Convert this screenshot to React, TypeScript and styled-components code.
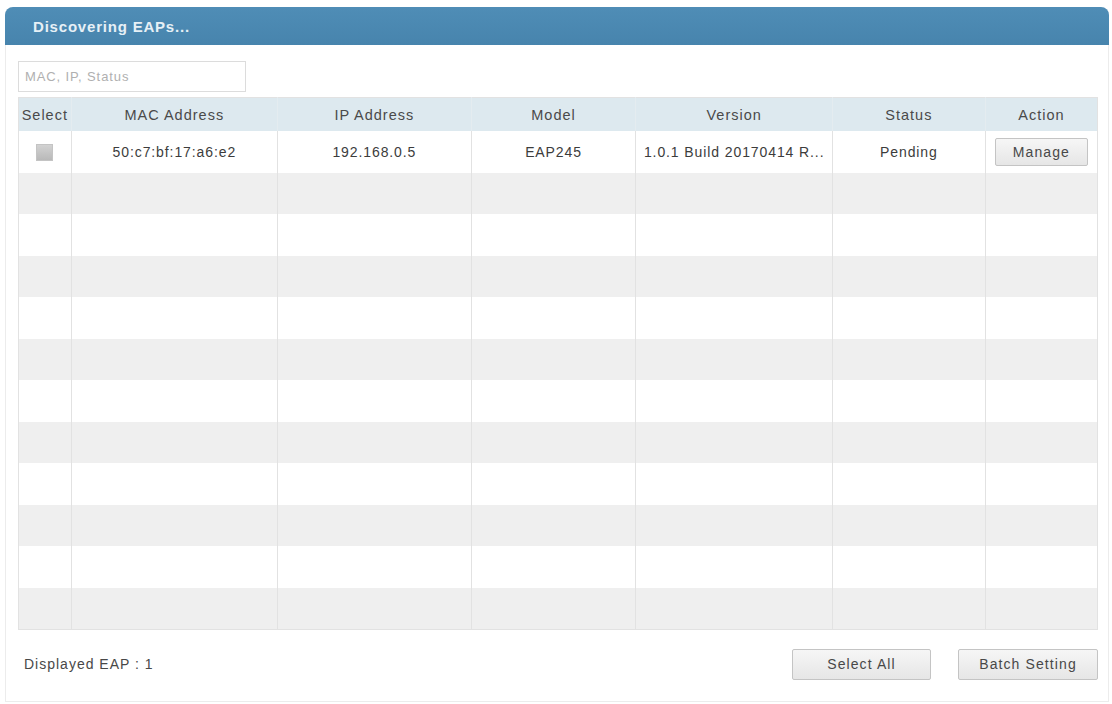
import styled, { createGlobalStyle } from "styled-components";

const GlobalStyle = createGlobalStyle`
  html, body {
    margin: 0;
    padding: 0;
    background: #ffffff;
    font-family: "Liberation Sans", Arial, sans-serif;
  }
`

const Page = styled.div`
  padding: 7px 3px 2px 5px;
  width: 1112px;
  height: 704px;
  box-sizing: border-box;
`

const Panel = styled.div`
  border: 1px solid #ececec;
  border-top: none;
  border-radius: 8px 8px 0 0;
  height: 100%;
  box-sizing: border-box;
  display: flex;
  flex-direction: column;
`

const PanelHeader = styled.div`
  height: 38px;
  margin: 0 -1px;
  background: linear-gradient(#4f8db6, #4784ad);
  border-radius: 8px 8px 0 0;
  color: #e6f0f6;
  font-size: 15px;
  font-weight: bold;
  letter-spacing: 0.8px;
  display: flex;
  align-items: center;
  padding-left: 28px;
`

const Body = styled.div`
  padding: 16px 10px 0 12px;
  flex: 1;
  display: flex;
  flex-direction: column;
`

const Search = styled.input`
  width: 228px;
  height: 31px;
  box-sizing: border-box;
  border: 1px solid #dcdcdc;
  padding: 0 6px;
  font-family: inherit;
  font-size: 13px;
  letter-spacing: 0.9px;
  color: #444;
  outline: none;
  &::placeholder {
    color: #b0b0b0;
  }
`

const Table = styled.table`
  margin-top: 5px;
  width: 1080px;
  border-collapse: collapse;
  table-layout: fixed;
  border: 1px solid #e2e2e2;
  font-size: 14px;
  color: #444;
`

const Th = styled.th<{ $w: number }>`
  width: ${p => p.$w}%;
  height: 33px;
  background: #dde9ef;
  font-weight: normal;
  font-size: 14.5px;
  letter-spacing: 1px;
  color: #4a4a4a;
  border-left: 1px solid #e4ecf0;
  text-align: center;
  padding: 0;
  &:first-child {
    border-left: none;
  }
`

const Tr = styled.tr<{ $alt: boolean }>`
  height: 41.5px;
  background: ${p => (p.$alt ? "#efefef" : "#ffffff")};
`

const Td = styled.td`
  border-left: 1px solid #e2e2e2;
  text-align: center;
  padding: 0 2px;
  white-space: nowrap;
  overflow: hidden;
  font-size: 14px;
  letter-spacing: 0.9px;
  color: #3c3c3c;
  &:first-child {
    border-left: none;
  }
`

const Check = styled.span`
  display: inline-block;
  width: 17px;
  height: 17px;
  vertical-align: middle;
  box-sizing: border-box;
  border: 1px solid #c4c4c4;
  background: linear-gradient(#d2d2d2, #b9b9b9);
`

const Button = styled.button<{ $w: number; $h: number }>`
  width: ${p => p.$w}px;
  height: ${p => p.$h}px;
  border: 1px solid #c4c4c4;
  border-radius: 2px;
  background: linear-gradient(#f6f6f6, #e6e6e6);
  font-family: inherit;
  font-size: 14px;
  letter-spacing: 1.1px;
  color: #484848;
  padding: 0;
`

const Footer = styled.div`
  display: flex;
  align-items: center;
  margin-top: 19px;
  padding-left: 6px;
  gap: 27px;
`

const Count = styled.div`
  flex: 1;
  font-size: 14px;
  letter-spacing: 1px;
  color: #484848;
`

const columns = [
  { label: "Select", w: 52 },
  { label: "MAC Address", w: 207 },
  { label: "IP Address", w: 194 },
  { label: "Model", w: 165 },
  { label: "Version", w: 197 },
  { label: "Status", w: 153 },
  { label: "Action", w: 112 },
]
const total = columns.reduce((s, c) => s + c.w, 0)

export default function App() {
  const emptyRows = Array.from({ length: 11 }, (_, i) => i)
  return (
    <Page>
      <GlobalStyle />
      <Panel>
        <PanelHeader>Discovering EAPs...</PanelHeader>
        <Body>
          <Search placeholder="MAC, IP, Status" />
          <Table>
            <thead>
              <tr>
                {columns.map(c => (
                  <Th key={c.label} $w={(c.w / total) * 100}>{c.label}</Th>
                ))}
              </tr>
            </thead>
            <tbody>
              <Tr $alt={false}>
                <Td><Check /></Td>
                <Td>50:c7:bf:17:a6:e2</Td>
                <Td>192.168.0.5</Td>
                <Td>EAP245</Td>
                <Td>1.0.1 Build 20170414 R...</Td>
                <Td>Pending</Td>
                <Td><Button $w={93} $h={28}>Manage</Button></Td>
              </Tr>
              {emptyRows.map(i => (
                <Tr key={i} $alt={i % 2 === 0}>
                  {columns.map(c => (
                    <Td key={c.label} />
                  ))}
                </Tr>
              ))}
            </tbody>
          </Table>
          <Footer>
            <Count>Displayed EAP : 1</Count>
            <Button $w={139} $h={31}>Select All</Button>
            <Button $w={140} $h={31}>Batch Setting</Button>
          </Footer>
        </Body>
      </Panel>
    </Page>
  )
}
